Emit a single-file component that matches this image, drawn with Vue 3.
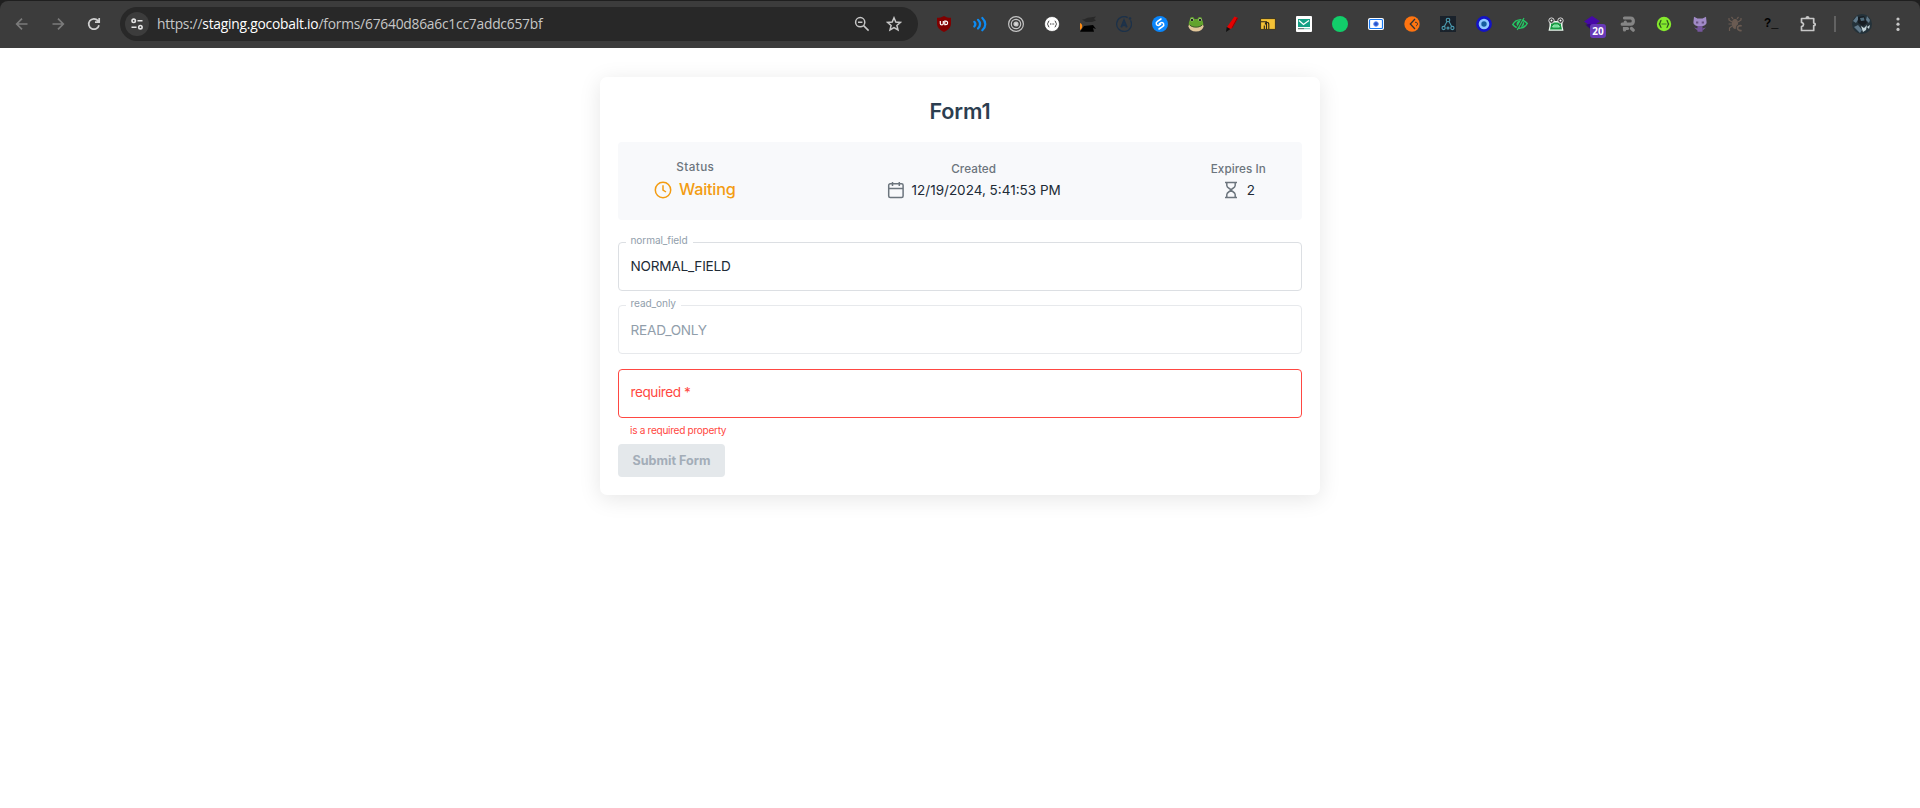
<template>
  <div class="page">
    <div class="window">
      <header class="toolbar">
        <div class="nav">
          <svg class="nav-icon dim" viewBox="0 0 16 16"><path d="M13.5 8H3M8 2.700 2.700 8 8 13.300" /></svg>
          <svg class="nav-icon dim" viewBox="0 0 16 16"><path d="M2.500 8H13M8 2.700 13.300 8 8 13.300" /></svg>
          <svg class="nav-icon" viewBox="0 0 16 16"><path d="M13 9.200A5.200 5.200 0 1 1 11.900 4.600L13 5.800M13.200 2v4.200H9" /></svg>
        </div>
        <div class="omnibox">
          <span class="site-info">
            <svg width="14" height="14" viewBox="0 0 14 14" fill="none" stroke="#e3e3e3" stroke-width="1.600">
              <circle cx="3.700" cy="3.800" r="1.700" /><path d="M7.500 3.800h5M1.500 10.200h5" /><circle cx="10.400" cy="10.200" r="1.700" />
            </svg>
          </span>
          <span class="url">https://<b>staging.gocobalt.io</b>/forms/67640d86a6c1cc7addc657bf</span>
          <svg class="box-icon" viewBox="0 0 16 16"><circle cx="6.200" cy="6.200" r="4.600" /><path d="M9.600 9.600 14.600 14.600M4 6.200h4.400" /></svg>
          <svg class="box-icon" viewBox="0 0 16 16"><path d="M8 1.800 9.800 6l4.600.4-3.500 3 1.100 4.500L8 11.500l-4 2.400 1.100-4.500-3.500-3L6.200 6z" /></svg>
        </div>
        <div class="extensions">
          <svg viewBox="0 0 16 16">
            <path fill="#800000" d="M8 0c2 1.400 4.500 1.800 7 1.800v5.700c0 4-3 6.500-7 8.500-4-2-7-4.500-7-8.500V1.800C3.500 1.800 6 1.400 8 0z" />
            <path d="M4.300 5v2.400c0 2 3 2 3 0V5M8.800 5.100v3.600h1c2.400 0 2.400-3.600 0-3.600z" fill="none" stroke="#fff" stroke-width="1.200" />
          </svg>
          <svg viewBox="0 0 16 16" fill="none" stroke="#0d8bf2" stroke-width="2.200" stroke-linecap="round">
            <path d="M2.300 5.800c1.400 1.500 1.400 3.200 0 4.700M6 3.800c2.600 2.700 2.600 6 0 8.700M10.300 2c4 3.900 4 8.400 0 12.300" />
          </svg>
          <svg viewBox="0 0 16 16" fill="none" stroke="#c4c4c4" stroke-width="1.200">
            <circle cx="8" cy="8" r="7.400" /><circle cx="8" cy="8" r="4.700" /><circle cx="8" cy="8" r="2" fill="#d8d8d8" />
          </svg>
          <svg viewBox="0 0 16 16">
            <circle cx="8" cy="8" r="7.500" fill="#fff" stroke="#222" stroke-width=".6" />
            <path d="M5.300 5C3.500 5 5 7.400 3.300 8 5 8.600 3.500 11 5.300 11M10.700 5c1.800 0 .3 2.400 2 3-1.700.6-.2 3-2 3" fill="none" stroke="#333" />
            <path d="M6 8h1M7.600 8h1M9.200 8h1" stroke="#333" />
          </svg>
          <svg viewBox="0 0 16 16">
            <path fill="#292929" d="M2 3.500C5 4 7 1 10 1.500l6-1-2 2.500 2 1.500-4 1.500H6z" />
            <path fill="#000" d="M0 15.800 4 10l9-1 3 4-3-1 1 3.800z" /><path fill="#ff8c13" d="M0 7c3 1 3 5 0 7z" />
          </svg>
          <svg viewBox="0 0 16 16" fill="none" stroke="#1c3149" stroke-width="1.300">
            <path d="M14.500 4.400A7.400 7.400 0 1 1 11.700 1.600" /><path stroke-width="1.900" d="M5.200 11.300 8 4.500l2.800 6.800M6 9.300h4" /><circle cx="14" cy="2.500" r=".7" />
          </svg>
          <svg viewBox="0 0 16 16">
            <circle cx="8" cy="8" r="8" fill="#0a86fb" />
            <path d="M9 3 5.500 5.300C3 7 4.500 10 7 9.300l1.700-1.200M7 13l3.500-2.300c2.500-1.700 1-4.700-1.500-4L7.300 7.900" fill="none" stroke="#fff" stroke-width="1.500" stroke-linecap="round" />
          </svg>
          <svg viewBox="0 0 16 16">
            <ellipse cx="8" cy="10.200" rx="7.500" ry="5.300" fill="#e2c79a" />
            <path d="M.7 8.500c0-3 1.200-4 1.200-5 0-3.200 4-3 4.500-.5h3.200c.5-2.500 4.500-2.700 4.500.5 0 1 1.200 2 1.200 5-3 3.800-11.600 3.800-14.600 0z" fill="#62a32c" />
            <circle cx="4" cy="3.800" r="1.500" fill="#d9dfd0" /><circle cx="12" cy="3.800" r="1.500" fill="#d9dfd0" />
            <circle cx="4" cy="3.900" r="1.200" fill="#222" /><circle cx="12" cy="3.900" r="1.200" fill="#222" />
            <path d="M2 9.200c3 2.600 9 2.600 12 0" fill="none" stroke="#33402b" stroke-width=".8" />
          </svg>
          <svg viewBox="0 0 16 16">
            <path fill="#e60000" d="M10.500.5 14 2 8.500 11.800 4.500 14 3 11z" /><path fill="#860000" d="M13 1.700 14 2 8.500 11.800l-1 .3z" /><path fill="#111" d="M2.700 11 6.500 13 2 16z" />
          </svg>
          <svg viewBox="0 0 16 16">
            <path fill="#f5c236" stroke="#2b2418" stroke-width=".8" d="M.6 2.600h14.800v10.800H.6z" />
            <path d="M1 5.800h5.500v7.500M4.300 13V9.500M8.800 13V8.500c0-3-3.500-3-3.500 0" fill="none" stroke="#2b2418" stroke-width="1.100" />
          </svg>
          <svg viewBox="0 0 16 16">
            <rect width="16" height="16" rx="1" fill="#fff" /><path fill="#15a085" d="M2 3h12v8H2z" />
            <path d="M3 4.500 7.500 8.500 13 4.500" fill="none" stroke="#fff" stroke-width="1.300" /><path d="M2 12.700h6" stroke="#4d665f" /><path d="M8 12.700h6" stroke="#78c6b7" />
          </svg>
          <svg viewBox="0 0 16 16"><circle cx="8" cy="8" r="8" fill="#12cd6a" /></svg>
          <svg viewBox="0 0 16 16">
            <rect y="2" width="16" height="12" rx="2" fill="#fff" />
            <rect x="1.500" y="3.500" width="13" height="9" rx="1" fill="#fff" stroke="#1979f2" stroke-width="1.200" /><circle cx="8" cy="8" r="2.300" fill="#2751c9" stroke="#628ff3" />
          </svg>
          <svg viewBox="0 0 16 16">
            <circle cx="8" cy="8" r="7.700" fill="#ff7410" />
            <path d="M11 3 6.300 8l4.700 5" fill="none" stroke="#333" stroke-width="1.300" /><path d="M11 6.500c2.500-1.500 3.500 3 1 3.300" fill="none" stroke="#333" />
          </svg>
          <svg viewBox="0 0 16 16">
            <rect width="16" height="16" fill="#1a222b" />
            <g fill="none" stroke="#4b9bb0" stroke-width="1.100"><circle cx="8" cy="4" r="1.800" /><circle cx="3.600" cy="12" r="1.600" /><circle cx="8" cy="12" r="1" /><circle cx="12.400" cy="12" r="1.600" /><path d="M7 5.600 4.300 10.500M9 5.600l2.700 4.900" /></g>
          </svg>
          <svg viewBox="0 0 16 16"><circle cx="8" cy="8" r="6.600" fill="#8ec8ff" stroke="#1313c5" stroke-width="2.600" /><circle cx="8" cy="8" r="2.700" fill="#155e9f" /></svg>
          <svg viewBox="0 0 16 16" fill="none" stroke="#25c864" stroke-width="1.500">
            <path d="M.8 8.500C4 2.500 11 2.500 15.200 7.500 12 13.500 5 13.500.8 8.500z" /><path fill="#25c864" stroke="none" d="M4.500 8.500c0-3 2-4.500 4.500-4L6 11zM11.500 5.500c1.500 2 .5 5-2.500 5.500z" /><path stroke="#3c3c3c" stroke-width="1.200" d="M11 2 4 14" /><path stroke-width="1.200" d="M12 2 5.200 14" />
          </svg>
          <svg viewBox="0 0 16 16">
            <path d="M1.500 5h13v5l1 4.700H.5l1-4.700z" fill="#e9f8ed" /><path d="M3 6.500h10v3l1 4H2l1-4z" fill="#169b43" /><path d="M4.500 11 6 9h4l1.500 2z" fill="#34df70" stroke="#dff5e5" stroke-width=".7" />
            <circle cx="3.500" cy="4.600" r="2.700" fill="#333" stroke="#ddd" /><circle cx="12.500" cy="4.600" r="2.700" fill="#333" stroke="#ddd" /><circle cx="3.500" cy="4.600" r="1" fill="#fff" /><circle cx="12.500" cy="4.600" r="1" fill="#fff" />
          </svg>
          <span class="badged">
            <svg viewBox="0 0 16 16"><path fill="#4608a8" d="m8 0 8 5.300L8 11 0 5.500z" /><path fill="#310779" d="m1.500 8.800 4-1L8 9.500v5z" /></svg>
            <span class="badge">20</span>
          </span>
          <svg viewBox="0 0 16 16" fill="none" stroke="#858585" stroke-width="3.200" stroke-linecap="round">
            <path d="M4.500 2h6c3.800 0 3.800 6.200 0 6.200H2.200M5.300 8V6M4.500 14v-1.500h3M11.500 12.500l1.700 1.700" />
          </svg>
          <svg viewBox="0 0 16 16">
            <circle cx="8" cy="8" r="7.200" fill="#85ea2d" />
            <path d="M5.500 4.500C3.500 4.500 5 7.500 3 8c2 .5.5 3.500 2.500 3.500M10.500 4.500C12.500 4.500 11 7.500 13 8c-2 .5-.5 3.500-2.500 3.500" fill="none" stroke="#2c551c" stroke-width="1.300" /><path d="M5.500 8h5" stroke="#4c8b2b" stroke-width="1.200" />
          </svg>
          <svg viewBox="0 0 16 16">
            <path fill="#a18ac7" d="M2 .8 5.500 2.500h5L14 .8l.6 5.500c0 2.500-2.500 4-6.600 4s-6.600-1.500-6.600-4z" /><path fill="#76569d" d="M5.500 10h5v5.800h-5zM2 11.500l4 1-.5 2zM14 11.500l-4 1 .5 2z" />
            <path d="M4 5.500h2.300v2H4zM9.700 5.500H12v2H9.700z" fill="#675080" />
          </svg>
          <svg viewBox="0 0 16 16" fill="none" stroke="#6a5b52" stroke-width="1.200">
            <ellipse cx="7" cy="8" rx="2.500" ry="4.300" fill="#6a5b52" /><path d="M5 3 3.500.8M9 3l1.500-2.200M4 6 1 4V2M4 8H.5M4 10l-2.500 2v3M10 6l3-2V2" /><path stroke="#3c3c3c" stroke-width="3.400" d="M13.700 10c-5-2-6 5.500 0 4.500" /><path stroke-width="1.700" d="M13.700 10c-5-2-6 5.500 0 4.500" />
          </svg>
          <span class="terminal">?_</span>
          <svg viewBox="0 0 16 16" fill="none" stroke="#c7c7c7" stroke-width="1.700" stroke-linejoin="round">
            <path d="M1.500 2.500h12.200V7c2 0 2 2.600 0 2.600v4.900H1.500v-3.800c2.700-.5 2.700-3.800 0-4.200z" /><path fill="#c7c7c7" stroke="none" d="M5.500 2a2 2 0 0 1 4 0z" />
          </svg>
        </div>
        <span class="divider"></span>
        <svg class="avatar" viewBox="0 0 20 20">
          <circle cx="10" cy="10" r="10" fill="#24323a" />
          <path fill="#60798a" d="M1 7 5 2l2 2-3 5zM15 2l3 4-1 3-3-3zM2 13l4-2 4 5-2 3z" /><path fill="#161c22" d="m6 3 6-1 3 7-4 3-5-3z" />
          <path fill="#506b7a" d="m8 4 4-.5.5 3L9 7z" /><path fill="#c3d4da" d="m9 12 3 2 3-3-1 5-3 2zM15 13l3-2-1 4z" />
        </svg>
        <svg class="menu" viewBox="0 0 4 16"><circle cx="2" cy="3" r="1.600" /><circle cx="2" cy="8.200" r="1.600" /><circle cx="2" cy="13.400" r="1.600" /></svg>
      </header>
    </div>

    <main class="card">
      <h1>Form1</h1>
      <section class="summary">
        <div class="item status">
          <span class="caption">Status</span>
          <div class="value">
            <svg width="18" height="18" viewBox="0 0 18 18"><circle cx="9" cy="9" r="7.700" /><path d="M9 4.300V9l3 2" /></svg>
            <span>Waiting</span>
          </div>
        </div>
        <div class="item created">
          <span class="caption">Created</span>
          <div class="value">
            <svg width="18" height="18" viewBox="0 0 18 18"><rect x="1.700" y="2.800" width="14.400" height="13.700" rx="1.500" /><path d="M2 7.500h14M5.500 1v4M12.300 1v4" /></svg>
            <span>12/19/2024, 5:41:53 PM</span>
          </div>
        </div>
        <div class="item expires">
          <span class="caption">Expires In</span>
          <div class="value">
            <svg width="18" height="18" viewBox="0 0 18 18"><path d="M3 1.500h12M3 16.500h12M4.800 1.500v3C4.800 7 9 8 9 9s-4.200 2-4.200 4.500v3M13.200 1.500v3C13.200 7 9 8 9 9s4.200 2 4.200 4.500v3" /></svg>
            <span>2</span>
          </div>
        </div>
      </section>

      <form @submit.prevent>
        <fieldset class="field">
          <legend>normal_field</legend>
          <input v-model="normalField" type="text">
        </fieldset>
        <fieldset class="field readonly">
          <legend>read_only</legend>
          <input :value="readOnly" type="text" disabled>
        </fieldset>
        <div class="field required">
          <input v-model="requiredField" type="text" placeholder="required *">
        </div>
        <p class="error">is a required property</p>
        <button class="submit" :disabled="!requiredField">Submit Form</button>
      </form>
    </main>
  </div>
</template>

<script setup>
import { ref } from 'vue';

const normalField = ref('NORMAL_FIELD');
const readOnly = ref('READ_ONLY');
const requiredField = ref('');
</script>

<style>
body {
  margin: 0;
  background: #fff;
}
</style>

<style scoped>
.page {
  min-height: 808px;
  font-family: Inter, "Liberation Sans", sans-serif;
}

.window {
  padding-top: 1px;
  background: #1f1f1f;
}

.toolbar {
  display: flex;
  align-items: center;
  height: 47px;
  box-sizing: border-box;
  padding: 0 20px 1px 14px;
  border-radius: 8px 8px 0 0;
  background: #3c3c3c;
}

.nav {
  display: flex;
  gap: 20px;
  width: 106px;
}

.nav-icon {
  width: 16px;
  height: 16px;
  fill: none;
  stroke: #d0d0d0;
  stroke-width: 1.7;
}

.nav-icon.dim {
  stroke: #7b7b7b;
}

.omnibox {
  display: flex;
  align-items: center;
  width: 798px;
  height: 34px;
  box-sizing: border-box;
  padding: 0 16px 0 5px;
  border-radius: 17px;
  background: #282828;
}

.site-info {
  display: flex;
  align-items: center;
  justify-content: center;
  width: 24px;
  height: 24px;
  border-radius: 12px;
  background: #3c3c3c;
}

.url {
  flex: 1;
  margin-left: 8px;
  font-family: "Open Sans", "Noto Sans", sans-serif;
  font-size: 13.8px;
  line-height: 20px;
  letter-spacing: -0.22px;
  color: #c7c7c7;
}

.url b {
  font-weight: 400;
  color: #fff;
}

.box-icon {
  width: 16px;
  height: 16px;
  margin-left: 16px;
  fill: none;
  stroke: #c7c7c7;
  stroke-width: 1.5;
}

.extensions {
  display: flex;
  align-items: center;
  gap: 20px;
  margin-left: 18px;
}

.extensions svg {
  display: block;
  width: 16px;
  height: 16px;
}

.badged {
  position: relative;
  width: 16px;
}

.badge {
  position: absolute;
  top: 8px;
  left: 6px;
  width: 16px;
  height: 14px;
  border-radius: 3px;
  background: #673ab7;
  color: #fff;
  font: 700 10px/14px "Open Sans", sans-serif;
  text-align: center;
}

.terminal {
  width: 16px;
  font: 700 12px/16px "Liberation Mono", monospace;
  color: #000;
}

.divider {
  width: 2px;
  height: 16px;
  margin-left: 18px;
  background: #626262;
}

.avatar {
  width: 20px;
  height: 20px;
  margin-left: 16px;
}

.menu {
  width: 4px;
  height: 16px;
  margin-left: 24px;
  fill: #c7c7c7;
}

.card {
  width: 720px;
  height: 418px;
  box-sizing: border-box;
  margin: 29px auto 0;
  padding: 18px;
  border-radius: 7px;
  background: #fff;
  box-shadow: 0 4px 22px rgba(0, 0, 0, 0.1);
}

h1 {
  height: 32px;
  margin: 0 0 15px;
  font-size: 21.6px;
  line-height: 33px;
  font-weight: 600;
  letter-spacing: -0.1px;
  text-align: center;
  color: #2c3e50;
}

.summary {
  display: flex;
  justify-content: space-between;
  height: 78px;
  box-sizing: border-box;
  padding: 18px 36px;
  border-radius: 4px;
  background: #f8f9fb;
}

.item {
  display: flex;
  flex-direction: column;
  align-items: center;
  padding-top: 2px;
}

.caption {
  font-size: 11.7px;
  line-height: 14px;
  font-weight: 500;
  letter-spacing: 0.08px;
  color: #6c757d;
}

.value {
  display: flex;
  align-items: center;
  gap: 7px;
  height: 22px;
  margin-top: 3px;
  font-size: 13.5px;
  color: #212b36;
}

.value svg {
  fill: none;
  stroke: #6c757d;
  stroke-width: 1.5;
}

.created {
  padding-left: 1px;
}

.status {
  padding-top: 0;
}

.status .caption {
  padding-left: 1px;
  letter-spacing: 0.4px;
}

.status .value {
  margin-top: 5px;
  font-size: 16.2px;
  line-height: 20px;
  font-weight: 500;
  letter-spacing: -0.2px;
  color: #f39c12;
}

.status .value span {
  padding-bottom: 2px;
}

.status .value svg {
  stroke: #f39c12;
}

form {
  margin-top: 16px;
}

.field {
  display: flex;
  width: 684px;
  height: 55px;
  box-sizing: border-box;
  margin: 0;
  padding: 0 11.5px;
  border: 1px solid #dcdfe3;
  border-radius: 4px;
}

.field legend {
  height: 13px;
  margin-left: -5px;
  padding: 0 5px;
  font-size: 10.1px;
  line-height: 9px;
  letter-spacing: -0.1px;
  color: #919eab;
}

.field input {
  width: 100%;
  height: 33px;
  padding: 0;
  border: 0;
  outline: 0;
  background: none;
  font-family: inherit;
  font-size: 13.6px;
  letter-spacing: -0.22px;
  color: #212b36;
}

.field.readonly {
  margin-top: 8px;
  border-color: #e7e9ec;
}

.field.readonly input {
  height: 35px;
  color: #919eab;
}

.field.required {
  align-items: center;
  height: 49px;
  margin-top: 15px;
  padding-bottom: 3px;
  border-color: #ff4842;
}

.field.required input {
  letter-spacing: -0.45px;
}

.field.required input::placeholder {
  color: #ff4842;
  opacity: 1;
}

.error {
  margin: 6px 12px 8px;
  font-size: 10.1px;
  line-height: 12px;
  letter-spacing: -0.3px;
  color: #ff4842;
}

.submit {
  display: block;
  width: 107px;
  height: 33px;
  padding: 0;
  border: 0;
  border-radius: 4px;
  background: #e4e8eb;
  font-family: inherit;
  font-size: 12.6px;
  font-weight: 700;
  color: #a3adb8;
}
</style>
